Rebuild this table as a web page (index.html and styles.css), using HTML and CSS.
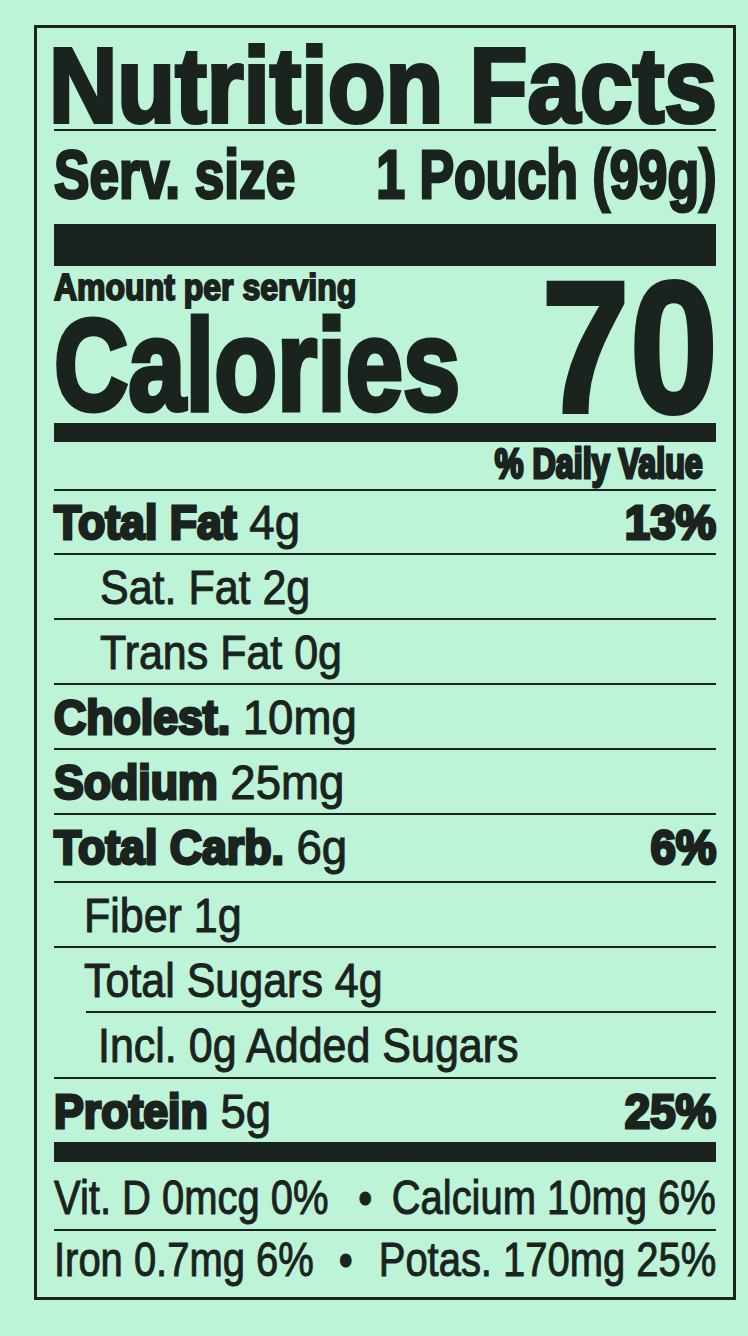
FILE: index.html
```html
<!DOCTYPE html>
<html lang="en">
<head>
<meta charset="utf-8">
<title>Nutrition Facts</title>
<link rel="stylesheet" href="styles.css">
</head>
<body>
<section class="label">
  <h1 class="title"><span class="sq sq-title">Nutrition Facts</span></h1>
  <div class="serving">
    <div class="lft"><span class="sq sq-serv">Serv. size</span></div>
    <div class="rgt"><span class="sq sq-serv-r r">1 Pouch (99g)</span></div>
  </div>
  <div class="bar bar-xl"></div>
  <div class="cal">
    <div class="lft">
      <div class="amount"><span class="sq sq-amount">Amount per serving</span></div>
      <div class="calories"><span class="sq sq-cal">Calories</span></div>
    </div>
    <div class="rgt cal-num"><span class="sq sq-num r">70</span></div>
  </div>
  <div class="bar bar-md"></div>
  <div class="dv"><span class="sq sq-dv r">% Daily Value</span></div>

  <div class="row row-first">
    <div class="lft"><span class="sq sq-main"><b>Total Fat</b> 4g</span></div>
    <div class="rgt"><span class="sq sq-pct r"><b>13%</b></span></div>
  </div>
  <div class="row row-sub">
    <div class="lft"><span class="sq sq-sub">Sat. Fat 2g</span></div>
  </div>
  <div class="row row-sub">
    <div class="lft"><span class="sq sq-sub">Trans Fat 0g</span></div>
  </div>
  <div class="row">
    <div class="lft"><span class="sq sq-main"><b>Cholest.</b> 10mg</span></div>
  </div>
  <div class="row">
    <div class="lft"><span class="sq sq-main"><b>Sodium</b> 25mg</span></div>
  </div>
  <div class="row row-tall">
    <div class="lft"><span class="sq sq-main"><b>Total Carb.</b> 6g</span></div>
    <div class="rgt"><span class="sq sq-pct r"><b>6%</b></span></div>
  </div>
  <div class="row row-mid">
    <div class="lft"><span class="sq sq-sub">Fiber 1g</span></div>
  </div>
  <div class="row row-mid">
    <div class="lft"><span class="sq sq-sub">Total Sugars 4g</span></div>
  </div>
  <div class="row row-incl">
    <div class="lft"><span class="sq sq-sub">Incl. 0g Added Sugars</span></div>
  </div>
  <div class="row">
    <div class="lft"><span class="sq sq-main"><b>Protein</b> 5g</span></div>
    <div class="rgt"><span class="sq sq-pct r"><b>25%</b></span></div>
  </div>
  <div class="bar bar-sm"></div>

  <div class="minerals vit">
    <div class="lft"><span class="sq sq-min">Vit. D 0mcg 0%</span></div>
    <div class="rgt"><span class="sq sq-min r"><span class="bul">•</span>Calcium 10mg 6%</span></div>
  </div>
  <div class="minerals iron">
    <div class="lft"><span class="sq sq-min">Iron 0.7mg 6%</span></div>
    <div class="rgt"><span class="sq sq-min r"><span class="bul bul-wide">•</span>Potas. 170mg 25%</span></div>
  </div>
</section>
</body>
</html>
```

FILE: styles.css
```css
* {
  box-sizing: border-box;
}

html,
body {
  margin: 0;
  padding: 0;
  background: #bdf3d7;
}

body {
  font-family: "Liberation Sans", Arial, Helvetica, sans-serif;
  color: #1a231e;
}

.label {
  width: 702px;
  margin: 25px 0 0 34px;
  border: 3px solid #1a231e;
  padding: 0 17px;
  overflow: hidden;
}

/* condensed text helper */
.sq {
  display: inline-block;
  white-space: nowrap;
  transform-origin: left center;
}

.sq.r {
  transform-origin: right center;
}

.lft {
  flex: 1 1 0;
  min-width: 0;
}

.rgt {
  flex: none;
}

/* title */
.title {
  margin: 0;
  padding-top: 14px;
  font-size: 106px;
  line-height: 87px;
  font-weight: 700;
  border-bottom: 2px solid #1a231e;
  -webkit-text-stroke: 4px;
}

.sq-title {
  margin-left: -5px;
  transform: scaleX(0.893);
}

/* serving size */
.serving {
  display: flex;
  padding: 9px 0 15px;
  font-size: 69px;
  line-height: 69px;
  font-weight: 700;
  -webkit-text-stroke: 3px;
}

.sq-serv {
  transform: scaleX(0.77);
}

.sq-serv-r {
  transform: scaleX(0.752);
}

/* bars */
.bar {
  background: #1a231e;
}

.bar-xl {
  height: 42px;
}

.bar-md {
  height: 19px;
}

.bar-sm {
  height: 20px;
}

/* calories */
.cal {
  display: flex;
  height: 157px;
  font-weight: 700;
}

.amount {
  padding-top: 2px;
  font-size: 36px;
  line-height: 40px;
  -webkit-text-stroke: 2px;
}

.sq-amount {
  transform: scaleX(0.889);
}

.calories {
  font-size: 130px;
  line-height: 115px;
  -webkit-text-stroke: 5px;
}

.sq-cal {
  transform: scaleX(0.792);
}

.cal-num {
  align-self: flex-end;
  margin-right: -2px;
  font-size: 187px;
  line-height: 150px;
  -webkit-text-stroke: 4px;
}

.sq-num {
  transform: scaleX(0.848);
}

/* daily value header */
.dv {
  padding: 0 13px 3px 0;
  text-align: right;
  font-size: 42px;
  line-height: 44px;
  font-weight: 700;
  -webkit-text-stroke: 3px;
}

.sq-dv {
  transform: scaleX(0.768);
}

/* nutrient rows */
.row {
  display: flex;
  border-top: 2px solid #1a231e;
  padding-top: 2px;
  font-size: 49px;
  line-height: 61px;
  -webkit-text-stroke: 1px;
}

.row b {
  font-size: 48px;
  font-weight: 700;
  -webkit-text-stroke: 3px;
}

.row-first {
  padding-top: 1px;
}

.row-tall {
  padding-bottom: 3px;
}

.row-sub .lft {
  padding-left: 46px;
}

.row-mid .lft {
  padding-left: 30px;
}

.row-incl {
  margin-left: 32px;
  padding-bottom: 1px;
}

.row-incl .lft {
  padding-left: 12px;
}

.sq-main {
  transform: scaleX(0.93);
}

.sq-sub {
  transform: scaleX(0.877);
}

.sq-pct {
  transform: scaleX(0.95);
}

/* vitamins & minerals */
.minerals {
  display: flex;
  font-size: 49px;
  -webkit-text-stroke: 1px;
}

.vit {
  padding-top: 4px;
  line-height: 63px;
  border-bottom: 2px solid #1a231e;
}

.iron {
  line-height: 56px;
  padding-bottom: 10px;
}

.sq-min {
  transform: scaleX(0.815);
}

.bul {
  margin-right: 24px;
}

.bul-wide {
  margin-right: 32px;
}
```
